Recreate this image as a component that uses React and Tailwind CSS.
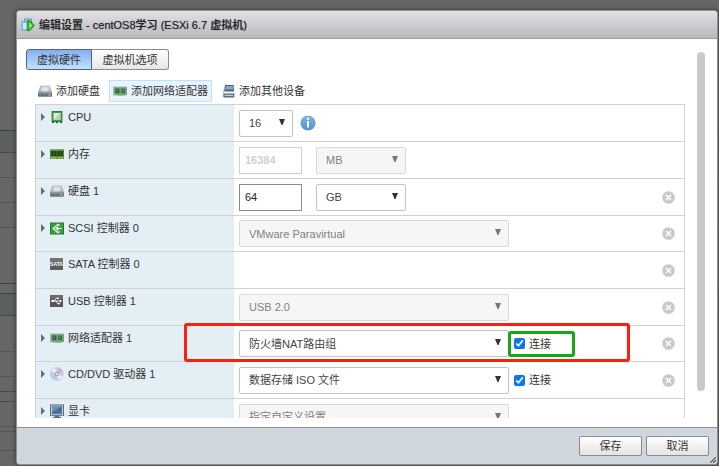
import { useState } from "react";
import clsx from "clsx";

const DiskIcon = () => (
  <svg viewBox="0 0 14 14" className="w-[14px] h-[14px]">
    <defs>
      <linearGradient id="diskTop" x1="0" y1="0" x2="0" y2="1">
        <stop offset="0" stopColor="#d3d8dd" />
        <stop offset="1" stopColor="#a3abb3" />
      </linearGradient>
    </defs>
    <path d="M2.6 2h8.8L14 9H0z" fill="url(#diskTop)" stroke="#8d959d" strokeWidth="0.5" />
    <ellipse cx="7" cy="5.2" rx="3.6" ry="2.2" fill="#dfe3e6" />
    <rect x="0" y="8.6" width="14" height="4.2" rx="0.8" fill="#6a747e" />
    <rect x="0.6" y="8.6" width="12.8" height="1" fill="#9aa3ab" />
    <rect x="10.5" y="10.4" width="2" height="1.2" fill="#b9d18b" />
  </svg>
);

const NetworkIcon = () => (
  <svg viewBox="0 0 14 14" className="w-[14px] h-[14px]">
    <rect x="0" y="2.4" width="1.2" height="9.6" fill="#b9c4bd" />
    <rect x="0.8" y="2.8" width="13.2" height="8.2" fill="#6fa67c" />
    <rect x="2.4" y="4.6" width="4" height="4.4" fill="#2f5a42" />
    <rect x="3.4" y="5.4" width="1.6" height="2.2" fill="#5b8a6c" />
    <rect x="8.3" y="4.6" width="3.6" height="4.4" fill="#34634a" />
    <rect x="9.2" y="5.4" width="1.6" height="2.2" fill="#5b8a6c" />
    <path d="M3 11h9v1H3z" fill="#b8bf83" />
    <path d="M1 3.1h13" stroke="#97c3a0" strokeWidth="0.6" />
  </svg>
);

const DeviceIcon = () => (
  <svg viewBox="0 0 14 14" className="w-[14px] h-[14px]">
    <path d="M4 1h8.6l.4 7H3z" fill="#44637f" />
    <path d="M4.8 2h7l.2 3.4H4.4z" fill="#86a7c4" />
    <path d="M4 1L2 7.5V13h1.2V6z" fill="#a9b5bf" />
    <rect x="2.6" y="7.4" width="10.8" height="2.4" fill="#eef1f3" />
    <rect x="2.6" y="9.6" width="10.8" height="3.8" rx="0.6" fill="#5b7183" />
    <rect x="3.6" y="10.8" width="8.4" height="1.2" fill="#c3ccd3" />
  </svg>
);

const CpuIcon = () => (
  <svg viewBox="0 0 14 14" className="w-[14px] h-[14px]">
    <rect x="1.6" y="1" width="10.8" height="11" fill="#2a7a30" />
    <path d="M2 12.4h2M6 12.6h2M10 12.6h2" stroke="#174d1b" strokeWidth="1" />
    <rect x="2.4" y="1.8" width="9.2" height="9.4" fill="#46a04a" />
    <rect x="3.6" y="3" width="6.8" height="7" fill="#e3e6e4" />
    <path d="M10.4 3v7H3.6z" fill="#c1c6c3" />
  </svg>
);

const MemoryIcon = () => (
  <svg viewBox="0 0 14 14" className="w-[14px] h-[14px]">
    <rect x="0" y="2" width="14" height="10" fill="#4c8d35" />
    <rect x="0" y="2" width="14" height="1.2" fill="#7cb35a" />
    <path d="M1.4 4h2.2v5H1.4zM4.4 4h2.2v5H4.4zM7.5 4h2.2v5H7.5zM10.5 4h2.2v5h-2.2z" fill="#26331f" />
    <path d="M0.8 10.8h5.6M7.8 10.8h5.6" stroke="#d8cc62" strokeWidth="1.6" strokeDasharray="1 0.5" />
  </svg>
);

const ScsiIcon = () => (
  <svg viewBox="0 0 14 14" className="w-[14px] h-[14px]">
    <rect x="0.5" y="2" width="13" height="11" fill="#35a33c" stroke="#237c2b" />
    <path d="M9.6 4.4L8 3.2 3.2 7.5 8 11.8l1.6-1.2" fill="none" stroke="#fff" strokeWidth="1.2" />
    <path d="M6.2 7.5h5.6M8.4 5.8L6.2 7.5l2.2 1.7" fill="none" stroke="#fff" strokeWidth="1.1" />
  </svg>
);

const SataIcon = () => (
  <svg viewBox="0 0 14 14" className="w-[14px] h-[14px]">
    <rect x="0" y="1" width="13" height="12" rx="0.6" fill="#5e5e60" />
    <rect x="0" y="1" width="13" height="4" fill="#737375" />
    <text x="6.5" y="8.8" textAnchor="middle" fontSize="5" fontWeight="bold" fill="#fff">
      SATA
    </text>
  </svg>
);

const UsbIcon = () => (
  <svg viewBox="0 0 14 14" className="w-[14px] h-[14px]">
    <rect x="0" y="1" width="13" height="12" rx="0.6" fill="#565658" />
    <rect x="0" y="1" width="13" height="4" fill="#6b6b6d" />
    <path d="M2 7h8M4.2 7l2-2.6h1.6M5.6 7l2 2.6H9" fill="none" stroke="#fff" strokeWidth="0.9" />
    <circle cx="2.6" cy="7" r="1.3" fill="#fff" />
    <circle cx="8" cy="4.3" r="0.9" fill="#fff" />
    <rect x="8.3" y="8.8" width="1.6" height="1.6" fill="#fff" />
    <path d="M9.8 5.6L12.2 7 9.8 8.4z" fill="#fff" />
  </svg>
);

const DiscIcon = () => (
  <svg viewBox="0 0 14 14" className="w-[14px] h-[14px]">
    <circle cx="6.8" cy="7" r="6.3" fill="#cfcfe0" stroke="#b3b5c1" strokeWidth="0.6" />
    <path d="M6.8 7L1.5 3.8A6.2 6.2 0 0 1 5 1.1z" fill="#f4f5fa" />
    <path d="M6.8 7l5.5 2.8a6.2 6.2 0 0 1-3.4 3z" fill="#eef0f8" />
    <path d="M6.8 7l1.8-5.9a6 6 0 0 1 4 3.7z" fill="#bfb5dc" />
    <path d="M6.8 7l-1.6 5.8a6 6 0 0 1-4-3.8z" fill="#b9c4e0" />
    <circle cx="6.8" cy="7" r="2.3" fill="#a79ecb" />
    <circle cx="6.8" cy="7" r="1.1" fill="#fff" />
  </svg>
);

const DisplayIcon = () => (
  <svg viewBox="0 0 14 14" className="w-[14px] h-[14px]">
    <rect x="0.5" y="0.9" width="13" height="10.4" fill="#c6d2dc" stroke="#566b7f" />
    <rect x="2" y="2.3" width="10" height="7.6" fill="#456f9b" />
    <path d="M2 2.3h10L2 8z" fill="#6c92b8" />
    <path d="M5 11.5h4v1.2h2V14H3v-1.3h2z" fill="#5b6c7c" />
  </svg>
);

const DialogIcon = () => (
  <svg viewBox="0 0 14 14" className="w-[14px] h-[14px] shrink-0">
    <rect x="3.5" y="1" width="7" height="7" fill="#b5def0" stroke="#4aa0c6" />
    <rect x="1" y="4" width="7" height="8" fill="#c9e9f6" stroke="#4aa0c6" />
    <path d="M6.2 2.6h2.6l4.6 4.8-4.6 5.2H6.2z" fill="#43b32b" stroke="#1f7c17" strokeWidth="0.8" />
    <path d="M8.4 4.4l2.8 3-2.8 3.2z" fill="#a8e884" />
  </svg>
);

const InfoIcon = () => (
  <svg viewBox="0 0 16 16" className="w-4 h-4 ml-[7px]">
    <defs>
      <linearGradient id="info" x1="0" y1="0" x2="0" y2="1">
        <stop offset="0" stopColor="#7cb4e8" />
        <stop offset="1" stopColor="#4f93d0" />
      </linearGradient>
    </defs>
    <circle cx="8" cy="8" r="7.6" fill="url(#info)" />
    <circle cx="8" cy="3.8" r="1.2" fill="#fff" />
    <path d="M8 6v6.6" fill="none" stroke="#fff" strokeWidth="2" />
  </svg>
);

const RemoveButton = ({ label }) => (
  <button type="button" aria-label={`删除 ${label}`} className="ml-auto mr-[9px]">
    <svg viewBox="0 0 13 13" className="w-[13px] h-[13px] block">
      <circle cx="6.5" cy="6.5" r="6.3" fill="#c9c9c9" />
      <path d="M4 4l5 5M9 4L4 9" stroke="#fff" strokeWidth="1.5" />
    </svg>
  </button>
);

const Select = ({ label, options, width, disabled }) => (
  <span className={clsx("relative block", width)}>
    <select
      aria-label={label}
      disabled={disabled}
      className="appearance-none w-full h-[27px] block pl-[9px] pr-5 rounded-[2px] border border-[#c3c3c3] bg-white text-[#444] disabled:border-[#d8d8d8] disabled:bg-[#f6f6f6] disabled:text-[#808080] disabled:opacity-100"
    >
      {options.map((option) => (
        <option key={option}>{option}</option>
      ))}
    </select>
    <svg
      viewBox="0 0 6 6"
      className={clsx(
        "absolute right-2 top-[9px] w-[6px] h-[6px] pointer-events-none",
        disabled ? "fill-[#777]" : "fill-[#333]"
      )}
    >
      <path d="M0 0h6L3.5 6h-1z" />
    </svg>
  </span>
);

const TextInput = ({ label, value, disabled }) => (
  <input
    type="text"
    aria-label={label}
    defaultValue={value}
    disabled={disabled}
    className="w-[63px] h-[27px] px-[5px] mr-[14px] border border-[#8c8c8c] bg-white text-[#222] disabled:border-[#cfcfcf] disabled:text-[#d0d0d0] disabled:font-bold"
  />
);

const Connect = ({ highlight }) => {
  const [checked, setChecked] = useState(true);

  return (
    <label className="relative flex items-center gap-1 ml-[5px]">
      <input
        type="checkbox"
        checked={checked}
        onChange={(e) => setChecked(e.target.checked)}
        className="w-[11px] h-[11px] accent-[#0b76ee]"
      />
      连接
      {highlight && (
        <span className="absolute -left-[6px] -right-6 -top-[5px] -bottom-[5px] border-3 border-[#17a81a] rounded-[3px] pointer-events-none" />
      )}
    </label>
  );
};

const devices = [
  {
    name: "CPU",
    icon: CpuIcon,
    expand: true,
    control: (
      <>
        <Select label="CPU" options={["16"]} width="w-[54px]" />
        <InfoIcon />
      </>
    ),
  },
  {
    name: "内存",
    icon: MemoryIcon,
    expand: true,
    control: (
      <>
        <TextInput label="内存" value="16384" disabled />
        <Select label="内存单位" options={["MB"]} width="w-[90px]" disabled />
      </>
    ),
  },
  {
    name: "硬盘 1",
    icon: DiskIcon,
    expand: true,
    remove: true,
    control: (
      <>
        <TextInput label="硬盘 1" value="64" />
        <Select label="硬盘单位" options={["GB"]} width="w-[90px]" />
      </>
    ),
  },
  {
    name: "SCSI 控制器 0",
    icon: ScsiIcon,
    expand: true,
    remove: true,
    compact: true,
    control: <Select label="SCSI 控制器 0" options={["VMware Paravirtual"]} width="w-[270px]" disabled />,
  },
  { name: "SATA 控制器 0", icon: SataIcon, remove: true },
  {
    name: "USB 控制器 1",
    icon: UsbIcon,
    remove: true,
    control: <Select label="USB 控制器 1" options={["USB 2.0"]} width="w-[270px]" disabled />,
  },
  {
    name: "网络适配器 1",
    icon: NetworkIcon,
    expand: true,
    remove: true,
    compact: true,
    highlight: true,
    control: (
      <>
        <Select label="网络适配器 1" options={["防火墙NAT路由组"]} width="w-[270px]" />
        <Connect highlight />
      </>
    ),
  },
  {
    name: "CD/DVD 驱动器 1",
    icon: DiscIcon,
    expand: true,
    remove: true,
    control: (
      <>
        <Select label="CD/DVD 驱动器 1" options={["数据存储 ISO 文件"]} width="w-[270px]" />
        <Connect />
      </>
    ),
  },
  {
    name: "显卡",
    icon: DisplayIcon,
    expand: true,
    control: <Select label="显卡" options={["指定自定义设置"]} width="w-[270px]" disabled />,
  },
];

const DeviceRow = ({ device }) => {
  const Icon = device.icon;

  return (
    <div
      className={clsx(
        "relative flex border-t border-[#d2d2d2]",
        device.compact ? "h-9" : "h-[37px]"
      )}
    >
      <div className="w-[198px] shrink-0 bg-[#e4eff5] pl-[5px]">
        <div className="flex items-center h-[23px]">
          <span className="w-[9px]">
            {device.expand && (
              <svg viewBox="0 0 4 8" className="w-1 h-2 fill-[#6b6b6b]">
                <path d="M0 0l4 4-4 4z" />
              </svg>
            )}
          </span>
          <Icon />
          <span className="ml-1">{device.name}</span>
        </div>
      </div>
      <div className="flex flex-1 items-center pl-[5px]">
        {device.control}
        {device.remove && <RemoveButton label={device.name} />}
      </div>
      {device.highlight && (
        <span className="absolute z-10 left-[148px] right-[54px] -top-[3px] -bottom-[1px] border-3 border-[#ff1d10] rounded-[3px] pointer-events-none" />
      )}
    </div>
  );
};

const tools = [
  { name: "添加硬盘", icon: DiskIcon },
  { name: "添加网络适配器", icon: NetworkIcon, active: true },
  { name: "添加其他设备", icon: DeviceIcon },
];

// Dimmed inventory list that shows around the dialog
const Backdrop = () => (
  <div className="absolute inset-0 bg-[#666] overflow-hidden">
    <div className="h-[131px] border-b border-[#3f3f3f]" />
    <div className="h-[22px] bg-[#5d6061] border-b border-[#4a4a4a]" />
    <div className="h-[25px] border-b border-[#555]" />
    <div className="h-[25px] border-b border-[#555]" />
    <div className="h-[25px] border-b border-[#555]" />
    <div className="h-[56px] border-b border-[#3f3f3f]" />
    <div className="h-[10px] border-b border-[#3f3f3f]" />
    <div className="h-[22px] bg-[#5d6061] border-b border-[#4a4a4a]" />
    <div className="h-[36px] border-b border-[#555]" />
    <div className="h-[25px] border-b border-[#555]" />
    <div className="h-[15px] border-b border-[#4a4a4a]" />
    <div className="h-[10px] border-b border-[#4a4a4a]" />
    <div className="h-[25px] border-b border-[#555]" />
    <div className="h-[5px] border-b border-[#555]" />
    <div className="h-[19px] border-b border-[#555]" />
  </div>
);

const App = () => {
  const [tab, setTab] = useState("hardware");

  const tabClass = (name) =>
    clsx(
      "h-[21px] border border-[#8b8b8b] bg-linear-to-b",
      tab === name ? "from-[#86aef0] to-[#c0e2fd] border-[#55647c]" : "from-white to-[#e6e6e6]"
    );

  return (
    <main className="relative h-screen flex flex-col pl-4 pr-px pt-[10px] pb-px text-[11px] leading-4 text-[#333] font-['Liberation_Sans','Noto_Sans_CJK_SC',sans-serif]">
      <Backdrop />
      <section
        role="dialog"
        aria-labelledby="title"
        className="relative flex flex-col flex-1 min-h-0 bg-white border border-[#8f8f8f] rounded-[4px] overflow-hidden shadow-[0_0_4px_#333]"
      >
        <header className="flex items-center gap-1 h-7 pl-1 border-b border-[#9c9c9c] bg-linear-to-b from-[#e2e2e6] to-[#b8b8bd]">
          <DialogIcon />
          <h1 id="title" className="font-medium text-[#222] text-shadow-[0_0_1px_#777]">
            编辑设置 - centOS8学习 (ESXi 6.7 虚拟机)
          </h1>
        </header>

        <div className="flex flex-1 min-h-0 pl-[9px] pr-3 pt-[10px] pb-[9px]">
          <div className="flex-1 min-w-0 overflow-hidden">
            <div className="flex">
              <button
                type="button"
                onClick={() => setTab("hardware")}
                className={clsx(tabClass("hardware"), "w-[66px] rounded-l-[3px]")}
              >
                虚拟硬件
              </button>
              <button
                type="button"
                onClick={() => setTab("options")}
                className={clsx(tabClass("options"), "w-[77px] rounded-r-[3px] border-l-0")}
              >
                虚拟机选项
              </button>
            </div>

            <div className="flex gap-[5px] pl-2 mt-[10px]">
              {tools.map(({ name, icon: Icon, active }) => (
                <button
                  key={name}
                  type="button"
                  className={clsx(
                    "flex items-center gap-1 h-[22px] px-[3px] border",
                    active ? "border-[#bfe0f8] bg-[#e8f4fd]" : "border-transparent"
                  )}
                >
                  <Icon />
                  {name}
                </button>
              ))}
            </div>

            <div className="ml-[9px] mt-[2px] border-x border-[#d2d2d2]">
              {devices.map((device) => (
                <DeviceRow key={device.name} device={device} />
              ))}
            </div>
          </div>
          <div className="ml-3 mt-[3px] mb-[27px] w-2 rounded-full bg-[#cacaca]" />
        </div>

        <footer className="relative flex justify-end gap-1 h-[37px] pt-2 pr-2 border-t border-[#8f8f8f] bg-[#cfd6de]">
          <button
            type="button"
            className="w-[63px] h-5 rounded-[2px] border border-[#8b8b8b] bg-linear-to-b from-white to-[#e4e4e4]"
          >
            保存
          </button>
          <button
            type="button"
            className="w-[63px] h-5 rounded-[2px] border border-[#8b8b8b] bg-linear-to-b from-white to-[#e4e4e4]"
          >
            取消
          </button>
          <svg viewBox="0 0 6 6" className="absolute right-px bottom-px w-[6px] h-[6px]">
            <path d="M0 6l6-6M3 6l3-3" stroke="#555" strokeWidth="1.2" />
          </svg>
        </footer>
      </section>
    </main>
  );
};

export default App;
